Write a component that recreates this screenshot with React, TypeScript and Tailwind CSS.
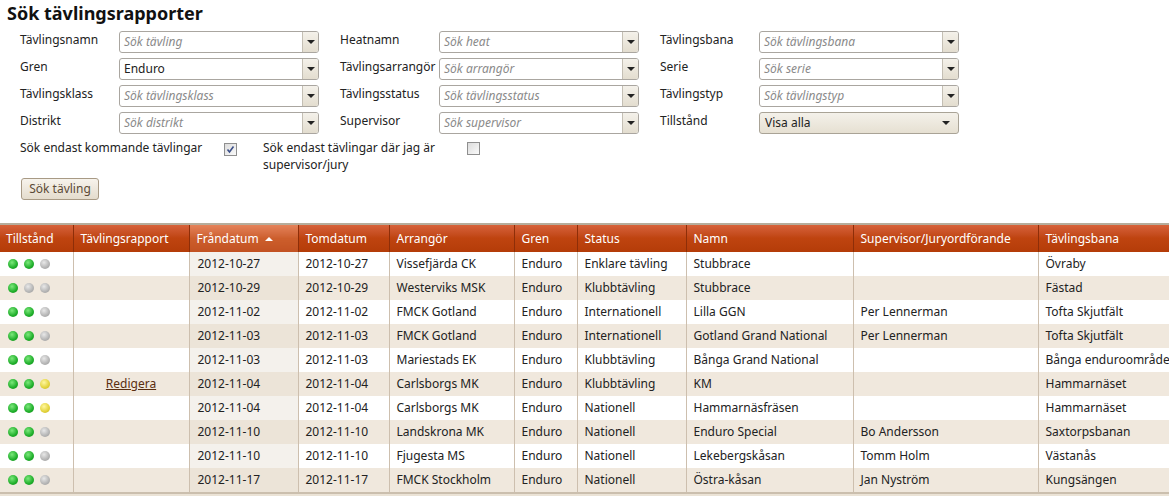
import { ReactNode } from 'react'

type Dot = 'g' | 's' | 'y'

const rows: { dots: Dot[]; link?: boolean; from: string; to: string; org: string; status: string; name: string; sup: string; track: string }[] = [
  { dots: ['g', 'g', 's'], from: '2012-10-27', to: '2012-10-27', org: 'Vissefjärda CK', status: 'Enklare tävling', name: 'Stubbrace', sup: '', track: 'Övraby' },
  { dots: ['g', 's', 's'], from: '2012-10-29', to: '2012-10-29', org: 'Westerviks MSK', status: 'Klubbtävling', name: 'Stubbrace', sup: '', track: 'Fästad' },
  { dots: ['g', 'g', 's'], from: '2012-11-02', to: '2012-11-02', org: 'FMCK Gotland', status: 'Internationell', name: 'Lilla GGN', sup: 'Per Lennerman', track: 'Tofta Skjutfält' },
  { dots: ['g', 'g', 's'], from: '2012-11-03', to: '2012-11-03', org: 'FMCK Gotland', status: 'Internationell', name: 'Gotland Grand National', sup: 'Per Lennerman', track: 'Tofta Skjutfält' },
  { dots: ['g', 'g', 's'], from: '2012-11-03', to: '2012-11-03', org: 'Mariestads EK', status: 'Klubbtävling', name: 'Bånga Grand National', sup: '', track: 'Bånga enduroområde' },
  { dots: ['g', 'g', 'y'], link: true, from: '2012-11-04', to: '2012-11-04', org: 'Carlsborgs MK', status: 'Klubbtävling', name: 'KM', sup: '', track: 'Hammarnäset' },
  { dots: ['g', 'g', 'y'], from: '2012-11-04', to: '2012-11-04', org: 'Carlsborgs MK', status: 'Nationell', name: 'Hammarnäsfräsen', sup: '', track: 'Hammarnäset' },
  { dots: ['g', 'g', 's'], from: '2012-11-10', to: '2012-11-10', org: 'Landskrona MK', status: 'Nationell', name: 'Enduro Special', sup: 'Bo Andersson', track: 'Saxtorpsbanan' },
  { dots: ['g', 'g', 's'], from: '2012-11-10', to: '2012-11-10', org: 'Fjugesta MS', status: 'Nationell', name: 'Lekebergskåsan', sup: 'Tomm Holm', track: 'Västanås' },
  { dots: ['g', 'g', 's'], from: '2012-11-17', to: '2012-11-17', org: 'FMCK Stockholm', status: 'Nationell', name: 'Östra-kåsan', sup: 'Jan Nyström', track: 'Kungsängen' },
]

const widths = [73, 116, 109, 91, 125, 63, 109, 167, 185, 131]

function StatusDot({ kind }: { kind: Dot }) {
  const cls =
    kind === 'g'
      ? 'bg-[radial-gradient(circle_at_40%_35%,#7be87b,#1fae2a_60%,#168a1e)]'
      : kind === 'y'
        ? 'bg-[radial-gradient(circle_at_40%_35%,#fff7a0,#e2d23a_60%,#bfae22)]'
        : 'bg-[radial-gradient(circle_at_40%_35%,#e8e8e8,#b4b4b4_60%,#979797)]'
  return <span className={`inline-block w-[10px] h-[10px] rounded-full ${cls}`} />
}

function Select({ text, placeholder, plain }: { text: string; placeholder?: boolean; plain?: boolean }) {
  if (plain) {
    return (
      <div className="w-[200px] h-[22px] flex items-center rounded-[3px] border border-[#a9a396] bg-gradient-to-b from-[#f4f1ea] to-[#e6e0d2] pl-[5px] pr-[8px]">
        <span className="flex-1 text-[#222]">{text}</span>
        <span className="w-0 h-0 border-l-[4px] border-r-[4px] border-t-[4px] border-l-transparent border-r-transparent border-t-[#222]" />
      </div>
    )
  }
  return (
    <div className="w-[200px] h-[22px] flex rounded-[3px] border border-[#aaa6a0] bg-white overflow-hidden">
      <span className={`flex-1 flex items-center pl-[4px] ${placeholder ? 'italic text-[#8a8a8a]' : 'text-[#222]'}`}>{text}</span>
      <span className="w-[16px] flex items-center justify-center border-l border-[#c4bfb4] bg-gradient-to-b from-[#f4f1ea] to-[#e3ddcf]">
        <span className="w-0 h-0 border-l-[4px] border-r-[4px] border-t-[4px] border-l-transparent border-r-transparent border-t-[#222]" />
      </span>
    </div>
  )
}

function Field({ label, children }: { label: string; children: ReactNode }) {
  return (
    <div className="flex">
      <div className="w-[99px] text-[#222] pt-[1px] whitespace-nowrap">{label}</div>
      {children}
    </div>
  )
}

function Checkbox({ checked }: { checked?: boolean }) {
  return (
    <span className="inline-flex w-[13px] h-[13px] border border-[#8f8f8f] bg-gradient-to-br from-[#dcdcdc] to-[#fafafa] items-center justify-center">
      {checked && (
        <svg width="9" height="9" viewBox="0 0 9 9">
          <path d="M1.5 4.5 L3.5 7 L7.5 1.5" stroke="#3b4f88" strokeWidth="1.6" fill="none" />
        </svg>
      )}
    </span>
  )
}

const headers = ['Tillstånd', 'Tävlingsrapport', 'Fråndatum', 'Tomdatum', 'Arrangör', 'Gren', 'Status', 'Namn', 'Supervisor/Juryordförande', 'Tävlingsbana']

export default function App() {
  return (
    <div className="w-[1169px] h-[496px] overflow-hidden bg-white text-[12px] leading-[16px] text-[#222] font-['Noto_Sans','Open_Sans',sans-serif]">
      <h1 className="pl-[7px] pt-[1px] text-[18px] leading-[24px] font-bold text-[#111]">Sök tävlingsrapporter</h1>

      <div className="pl-[20px] pt-[6px] grid grid-cols-[299px_299px_299px] gap-x-[21px] gap-y-[5px]">
        <Field label="Tävlingsnamn"><Select text="Sök tävling" placeholder /></Field>
        <Field label="Heatnamn"><Select text="Sök heat" placeholder /></Field>
        <Field label="Tävlingsbana"><Select text="Sök tävlingsbana" placeholder /></Field>
        <Field label="Gren"><Select text="Enduro" /></Field>
        <Field label="Tävlingsarrangör"><Select text="Sök arrangör" placeholder /></Field>
        <Field label="Serie"><Select text="Sök serie" placeholder /></Field>
        <Field label="Tävlingsklass"><Select text="Sök tävlingsklass" placeholder /></Field>
        <Field label="Tävlingsstatus"><Select text="Sök tävlingsstatus" placeholder /></Field>
        <Field label="Tävlingstyp"><Select text="Sök tävlingstyp" placeholder /></Field>
        <Field label="Distrikt"><Select text="Sök distrikt" placeholder /></Field>
        <Field label="Supervisor"><Select text="Sök supervisor" placeholder /></Field>
        <Field label="Tillstånd"><Select text="Visa alla" plain /></Field>
      </div>

      <div className="pl-[20px] pt-[5px] flex items-start">
        <div className="w-[204px] leading-[17px]">Sök endast kommande tävlingar</div>
        <div className="w-[39px] pt-[3px]"><Checkbox checked /></div>
        <div className="w-[204px] leading-[17px]">Sök endast tävlingar där jag är supervisor/jury</div>
        <div className="pt-[3px]"><Checkbox /></div>
      </div>

      <div className="pl-[21px] pt-[5px]">
        <button className="w-[78px] h-[22px] rounded-[3px] border border-[#a89a85] bg-gradient-to-b from-[#f7f3ec] to-[#e4dccd] text-[#5b4a36]">
          Sök tävling
        </button>
      </div>

      <table className="mt-[23px] table-fixed border-collapse border-t-2 border-[#b5ad9c] w-[1169px] whitespace-nowrap">
        <colgroup>
          {widths.map((w, i) => (
            <col key={i} style={{ width: w }} />
          ))}
        </colgroup>
        <thead>
          <tr className="text-white bg-gradient-to-b from-[#d8643c] via-[#bf4410] to-[#b43c08]">
            {headers.map((h, i) => (
              <th
                key={h}
                className={`h-[28px] p-0 text-left font-normal border-r border-[#8e2e08] overflow-hidden ${i === 0 ? 'pl-[6px]' : 'pl-[7px]'} ${
                  i === 2 ? 'bg-gradient-to-b from-[#e4825a] via-[#cc5e2c] to-[#c25222]' : ''
                }`}
              >
                {i === 2 ? (
                  <span className="flex items-center gap-[6px]">
                    {h}
                    <span className="w-0 h-0 border-l-[4px] border-r-[4px] border-b-[4px] border-l-transparent border-r-transparent border-b-white" />
                  </span>
                ) : (
                  h
                )}
              </th>
            ))}
          </tr>
        </thead>
        <tbody>
          {rows.map((r, i) => {
            const odd = i % 2 === 1
            return (
              <tr key={i} className={odd ? 'bg-[#f0e8dd]' : 'bg-white'}>
                <td className="h-[24px] border-r border-[#cdbfae] pl-[8px]">
                  <span className="flex gap-[6px] items-center">
                    {r.dots.map((d, j) => (
                      <StatusDot key={j} kind={d} />
                    ))}
                  </span>
                </td>
                <td className="border-r border-[#cdbfae] text-center">
                  {r.link && <span className="underline text-[#5a2e10]">Redigera</span>}
                </td>
                <td className={`border-r border-[#cdbfae] pl-[8px] ${odd ? 'bg-[#ece4d8]' : 'bg-[#f4f1ec]'}`}>{r.from}</td>
                <td className="border-r border-[#cdbfae] pl-[7px]">{r.to}</td>
                <td className="border-r border-[#cdbfae] pl-[7px] overflow-hidden">{r.org}</td>
                <td className="border-r border-[#cdbfae] pl-[7px]">Enduro</td>
                <td className="border-r border-[#cdbfae] pl-[7px] overflow-hidden">{r.status}</td>
                <td className="border-r border-[#cdbfae] pl-[7px] overflow-hidden">{r.name}</td>
                <td className="border-r border-[#cdbfae] pl-[7px] overflow-hidden">{r.sup}</td>
                <td className="pl-[7px] overflow-hidden">{r.track}</td>
              </tr>
            )
          })}
        </tbody>
      </table>
      <div className="h-[10px] border-t-2 border-[#cbbfae] bg-[#ebe3d6]" />
    </div>
  )
}
